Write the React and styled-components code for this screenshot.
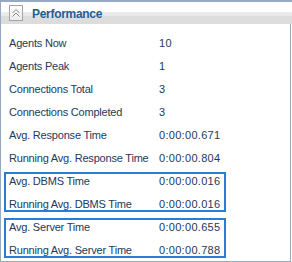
import React from 'react'
import styled, { createGlobalStyle } from 'styled-components'

const GlobalStyle = createGlobalStyle`
  body {
    margin: 0;
    background: #fff;
    font-family: Tahoma, "Liberation Sans", Arial, sans-serif;
  }
`

const Panel = styled.div`
  width: 292px;
  height: 262px;
  overflow: hidden;
  border-top: 2px solid #97a9c2;
  box-sizing: border-box;
`

const Header = styled.div`
  height: 22px;
  display: flex;
  align-items: flex-start;
  gap: 9px;
  padding: 3px 0 0 9px;
  box-sizing: border-box;
  border-left: 1px solid #97a9c2;
  background: linear-gradient(
    to bottom,
    #ffffff 0,
    #ffffff 10px,
    #ececec 10px,
    #e9e9e9 14px,
    #dddddd 14px,
    #dcdcdc 22px
  );
`

const CollapseButton = styled.div`
  width: 12px;
  height: 14px;
  border: 1px solid #a3a3a3;
  margin-left: -1px;
  background: linear-gradient(to bottom, #ffffff, #ececec);
  display: flex;
  align-items: center;
  justify-content: center;
`

const Title = styled.span`
  font-weight: bold;
  font-size: 12px;
  letter-spacing: -0.3px;
  line-height: 18px;
  color: #1f5d94;
`

const Body = styled.div`
  width: 291px;
  height: 238px;
  box-sizing: border-box;
  border-left: 1px solid #97a9c2;
  border-right: 1px solid #97a9c2;
  border-bottom: 1px solid #97a9c2;
  padding: 8px 0 0 3px;
  overflow: hidden;
`

const Group = styled.div`
  position: relative;

  &::after {
    content: '';
    position: absolute;
    left: 0;
    width: 222px;
    top: 2px;
    bottom: 4px;
    box-sizing: border-box;
    border: 2px solid #2a7dd4;
    pointer-events: none;
  }
`

const Row = styled.div`
  display: grid;
  grid-template-columns: 150px auto;
  padding-left: 5px;
  height: 23px;
  line-height: 23px;
  font-size: 11px;
  color: #22395a;
  white-space: nowrap;
`

const Label = styled.span`
  letter-spacing: -0.2px;
`

const Value = styled.span`
  letter-spacing: 0.3px;
`

const stats = [
  ['Agents Now', '10'],
  ['Agents Peak', '1'],
  ['Connections Total', '3'],
  ['Connections Completed', '3'],
  ['Avg. Response Time', '0:00:00.671'],
  ['Running Avg. Response Time', '0:00:00.804'],
]

const groups = [
  [
    ['Avg. DBMS Time', '0:00:00.016'],
    ['Running Avg. DBMS Time', '0:00:00.016'],
  ],
  [
    ['Avg. Server Time', '0:00:00.655'],
    ['Running Avg. Server Time', '0:00:00.788'],
  ],
]

const Chevrons = () => (
  <svg width="10" height="10" viewBox="0 0 10 10">
    <polyline points="1.5,5 5,1.5 8.5,5" fill="none" stroke="#8a8a8a" strokeWidth="1" />
    <polyline points="1.5,8.5 5,5 8.5,8.5" fill="none" stroke="#8a8a8a" strokeWidth="1" />
  </svg>
)

const StatRow = ({ label, value }) => (
  <Row>
    <Label>{label}</Label>
    <Value>{value}</Value>
  </Row>
)

export default function App() {
  return (
    <>
      <GlobalStyle />
      <Panel>
        <Header>
          <CollapseButton><Chevrons /></CollapseButton>
          <Title>Performance</Title>
        </Header>
        <Body>
          {stats.map(([label, value]) => (
            <StatRow key={label} label={label} value={value} />
          ))}
          {groups.map((rows, i) => (
            <Group key={i}>
              {rows.map(([label, value]) => (
                <StatRow key={label} label={label} value={value} />
              ))}
            </Group>
          ))}
        </Body>
      </Panel>
    </>
  )
}
